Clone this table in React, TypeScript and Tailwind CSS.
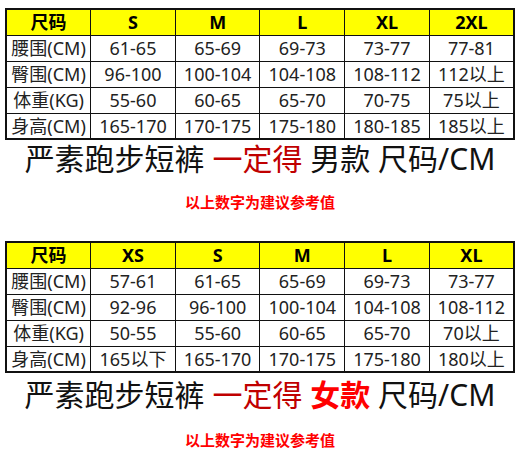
import React from 'react';

const font = { fontFamily: '"Noto Sans", "Noto Sans CJK SC", sans-serif' };

type Chart = { sizes: string[]; rows: [string, string[]][] };

const men: Chart = {
  sizes: ['S', 'M', 'L', 'XL', '2XL'],
  rows: [
    ['腰围(CM)', ['61-65', '65-69', '69-73', '73-77', '77-81']],
    ['臀围(CM)', ['96-100', '100-104', '104-108', '108-112', '112以上']],
    ['体重(KG)', ['55-60', '60-65', '65-70', '70-75', '75以上']],
    ['身高(CM)', ['165-170', '170-175', '175-180', '180-185', '185以上']],
  ],
};

const women: Chart = {
  sizes: ['XS', 'S', 'M', 'L', 'XL'],
  rows: [
    ['腰围(CM)', ['57-61', '61-65', '65-69', '69-73', '73-77']],
    ['臀围(CM)', ['92-96', '96-100', '100-104', '104-108', '108-112']],
    ['体重(KG)', ['50-55', '55-60', '60-65', '65-70', '70以上']],
    ['身高(CM)', ['165以下', '165-170', '170-175', '175-180', '180以上']],
  ],
};

const SizeTable = ({ chart }: { chart: Chart }) => (
  <table className="w-[510px] table-fixed border-collapse border-2 border-[#111]">
    <thead>
      <tr className="h-[26px] bg-[#ffff00]">
        <th className="border border-[#111] text-[18px] font-bold text-black leading-none">尺码</th>
        {chart.sizes.map((s) => (
          <th key={s} className="border border-[#111] text-[18px] font-bold text-black leading-none">
            {s}
          </th>
        ))}
      </tr>
    </thead>
    <tbody>
      {chart.rows.map(([label, vals]) => (
        <tr key={label} className="h-[26px]">
          <td className="border border-[#111] text-center text-[18px] text-[#222] leading-none whitespace-nowrap">{label}</td>
          {vals.map((v, i) => (
            <td key={i} className="border border-[#111] text-center text-[18px] text-[#222] leading-none whitespace-nowrap">
              {v}
            </td>
          ))}
        </tr>
      ))}
    </tbody>
  </table>
);

export default function App() {
  return (
    <div className="w-[520px] h-[456px] bg-white pt-[8px] px-[5px] overflow-hidden" style={font}>
      <SizeTable chart={men} />
      <div className="mt-[2px] text-center text-[30px] leading-[34px] text-[#111] whitespace-nowrap">
        严素跑步短裤 <span className="text-[#c00000]">一定得</span> 男款 尺码/CM
      </div>
      <div className="mt-[16px] text-center text-[15px] leading-[20px] font-bold text-[#ff0000]">以上数字为建议参考值</div>

      <div className="mt-[29px]">
        <SizeTable chart={women} />
      </div>
      <div className="mt-[5px] text-center text-[30px] leading-[34px] text-[#111] whitespace-nowrap">
        严素跑步短裤 <span className="text-[#c00000]">一定得</span>{' '}
        <span className="font-bold text-[#ff0000]">女款</span> 尺码/CM
      </div>
      <div className="mt-[18px] text-center text-[15px] leading-[20px] font-bold text-[#ff0000]">以上数字为建议参考值</div>
    </div>
  );
}
